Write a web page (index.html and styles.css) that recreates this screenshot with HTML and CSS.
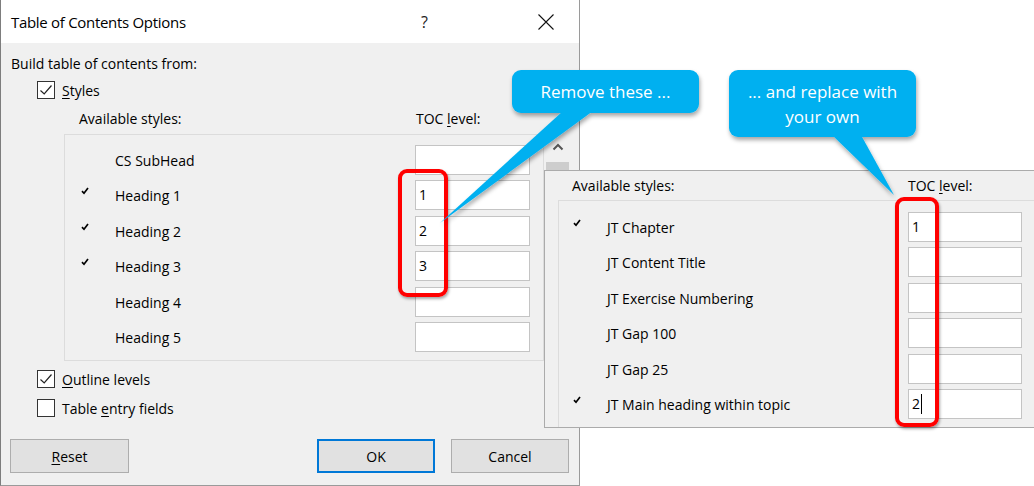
FILE: index.html
```html
<!DOCTYPE html>
<html>
<head>
<meta charset="utf-8">
<link rel="stylesheet" href="styles.css">
</head>
<body>
<div class="dialog">
  <div class="titlebar">
    <span class="title">Table of Contents Options</span>
    <span class="help">?</span>
    <span class="close"><svg width="16" height="16" viewBox="0 0 16 16"><path d="M0.5 0.5 L15.5 15.5 M15.5 0.5 L0.5 15.5" stroke="#111" stroke-width="1.1" fill="none"/></svg></span>
  </div>
  <div class="content">
    <div class="build">Build table of contents from:</div>
    <div class="check-row first">
      <span class="cb"><svg width="16" height="16" viewBox="0 0 16 16"><path d="M2.5 8.5 L6.2 12 L13.5 3.5" stroke="#222" stroke-width="1.2" fill="none"/></svg></span>
      <span class="cl"><u>S</u>tyles</span>
    </div>
    <div class="col-head">
      <span class="avail">Available styles:</span>
      <span>TOC <u>l</u>evel:</span>
    </div>
    <div class="list-wrap">
      <div class="listbox">
        <div class="row"><span class="tick"></span><span class="name">CS SubHead</span><span class="field"></span></div>
        <div class="row"><span class="tick"><svg width="8" height="8" viewBox="0 0 8 8"><path d="M1 4.2 L3 6.3 L7 1" stroke="#000" stroke-width="1.7" fill="none"/></svg></span><span class="name">Heading 1</span><span class="field">1</span></div>
        <div class="row"><span class="tick"><svg width="8" height="8" viewBox="0 0 8 8"><path d="M1 4.2 L3 6.3 L7 1" stroke="#000" stroke-width="1.7" fill="none"/></svg></span><span class="name">Heading 2</span><span class="field">2</span></div>
        <div class="row"><span class="tick"><svg width="8" height="8" viewBox="0 0 8 8"><path d="M1 4.2 L3 6.3 L7 1" stroke="#000" stroke-width="1.7" fill="none"/></svg></span><span class="name">Heading 3</span><span class="field">3</span></div>
        <div class="row"><span class="tick"></span><span class="name">Heading 4</span><span class="field"></span></div>
        <div class="row"><span class="tick"></span><span class="name">Heading 5</span><span class="field"></span></div>
      </div>
      <div class="scrollbar">
        <svg width="12" height="8" viewBox="0 0 12 8"><path d="M1.5 6.5 L6 2 L10.5 6.5" stroke="#555" stroke-width="2" fill="none"/></svg>
        <div class="thumb"></div>
      </div>
    </div>
    <div class="check-row outline">
      <span class="cb"><svg width="16" height="16" viewBox="0 0 16 16"><path d="M2.5 8.5 L6.2 12 L13.5 3.5" stroke="#222" stroke-width="1.2" fill="none"/></svg></span>
      <span class="cl"><u>O</u>utline levels</span>
    </div>
    <div class="check-row entry">
      <span class="cb"></span>
      <span class="cl">Table <u>e</u>ntry fields</span>
    </div>
    <div class="buttons">
      <button class="btn"><u>R</u>eset</button>
      <span class="spacer"></span>
      <button class="btn ok">OK</button>
      <button class="btn">Cancel</button>
    </div>
  </div>
</div>

<div class="panel">
  <div class="panel-head">
    <span class="avail2">Available styles:</span>
    <span>TOC <u>l</u>evel:</span>
  </div>
  <div class="panel-list">
    <div class="row prow"><span class="tick"><svg width="8" height="8" viewBox="0 0 8 8"><path d="M1 4.2 L3 6.3 L7 1" stroke="#000" stroke-width="1.7" fill="none"/></svg></span><span class="name">JT Chapter</span><span class="field">1</span></div>
    <div class="row prow"><span class="tick"></span><span class="name">JT Content Title</span><span class="field"></span></div>
    <div class="row prow"><span class="tick"></span><span class="name">JT Exercise Numbering</span><span class="field"></span></div>
    <div class="row prow"><span class="tick"></span><span class="name">JT Gap 100</span><span class="field"></span></div>
    <div class="row prow"><span class="tick"></span><span class="name">JT Gap 25</span><span class="field"></span></div>
    <div class="row prow"><span class="tick"><svg width="8" height="8" viewBox="0 0 8 8"><path d="M1 4.2 L3 6.3 L7 1" stroke="#000" stroke-width="1.7" fill="none"/></svg></span><span class="name">JT Main heading within topic</span><span class="field">2<span class="caret"></span></span></div>
  </div>
</div>

<div class="redbox r1"></div>
<div class="redbox r2"></div>

<svg class="callouts" width="1034" height="486" viewBox="0 0 1034 486">
  <defs>
    <filter id="sh" x="-20%" y="-20%" width="140%" height="140%">
      <feDropShadow dx="1" dy="3" stdDeviation="2.2" flood-color="#000" flood-opacity="0.35"/>
    </filter>
  </defs>
  <g fill="#00b0f0" filter="url(#sh)">
    <rect x="512" y="70" width="187" height="43" rx="9"/>
    <polygon points="563,111 593,111 440,223"/>
  </g>
  <g fill="#00b0f0" filter="url(#sh)">
    <rect x="729" y="70" width="187" height="67" rx="9"/>
    <polygon points="832,135 861,135 894,195"/>
  </g>
</svg>
<div class="callout-text c1">Remove these ...</div>
<div class="callout-text c2">... and replace with<br>your own</div>
</body>
</html>
```
FILE: styles.css
```css
* { box-sizing: border-box; }
html, body { margin: 0; padding: 0; }
body {
  width: 1034px;
  height: 486px;
  overflow: hidden;
  background: #ffffff;
  font-family: "Open Sans", "Noto Sans", sans-serif;
  font-size: 14px;
  color: #000;
  position: relative;
}
u { text-decoration-thickness: 1px; text-underline-offset: 2px; }

.dialog {
  width: 580px;
  height: 486px;
  border-left: 1px solid #7d7d7d;
  border-right: 1px solid #9a9a9a;
  border-bottom: 1px solid #9a9a9a;
  display: flex;
  flex-direction: column;
  background: #f0f0f0;
}
.titlebar {
  height: 43px;
  flex: 0 0 43px;
  background: #fff;
  display: flex;
  align-items: center;
  padding-left: 10px;
}
.title { font-size: 15px; letter-spacing: -0.3px; flex: 1; }
.help { width: 30px; text-align: center; font-size: 16px; margin-right: 90px; color: #222; padding-right: 3px; }
.close { width: 30px; display: flex; justify-content: center; margin-right: 18px; }

.content {
  flex: 1;
  padding-left: 10px;
  display: flex;
  flex-direction: column;
}
.build { line-height: 20px; margin-top: 11px; }
.check-row {
  display: flex;
  align-items: center;
  height: 18px;
  line-height: 18px;
  margin-left: 26px;
  gap: 7px;
}
.cl { padding-top: 2px; }
.check-row.first { margin-top: 7px; }
.cb {
  width: 18px;
  height: 18px;
  border: 1px solid #333;
  background: #fff;
  display: flex;
  align-items: center;
  justify-content: center;
}
.col-head {
  display: flex;
  line-height: 20px;
  margin-top: 10px;
  padding-left: 68px;
}
.avail { width: 337px; }

.list-wrap {
  display: flex;
  margin-top: 5px;
  margin-left: 53px;
  height: 227px;
}
.listbox {
  width: 480px;
  height: 227px;
  border: 1px solid #dcdcdc;
  padding: 10px 13px 0 16px;
}
.row {
  display: grid;
  grid-template-columns: 34px 300px 115px;
  height: 35.4px;
  align-items: start;
}
.tick { height: 30px; display: flex; align-items: center; padding-bottom: 8px; }
.name { line-height: 30px; padding-top: 1px; }
.field {
  height: 30px;
  background: #fff;
  border: 1px solid #c4c4c4;
  line-height: 28px;
  padding-left: 3px;
  display: flex;
  align-items: center;
}
.scrollbar {
  width: 27px;
  display: flex;
  flex-direction: column;
  align-items: center;
  padding-top: 9px;
}
.thumb {
  width: 23px;
  height: 50px;
  margin-top: 11px;
  background: #cdcdcd;
}

.check-row.outline { margin-top: 9px; }
.check-row.entry { margin-top: 11px; }

.buttons {
  display: flex;
  margin-top: 22px;
  margin-left: -1px;
  margin-right: 10px;
  gap: 16px;
}
.spacer { flex: 1; }
.btn {
  font-family: inherit;
  font-size: 14px;
  color: #000;
  height: 34px;
  width: 118px;
  background: #e1e1e1;
  border: 1px solid #adadad;
  padding: 0;
}
.btn:first-child { width: 119px; }
.btn.ok { border: 2px solid #0078d7; }

/* Overlaid second screenshot panel */
.panel {
  position: absolute;
  left: 544px;
  top: 170px;
  width: 490px;
  height: 258px;
  background: #f0f0f0;
  border: 1px solid #ababab;
  border-right: none;
  display: flex;
  flex-direction: column;
}
.panel-head {
  display: flex;
  line-height: 20px;
  padding-top: 5px;
  padding-left: 27px;
}
.avail2 { width: 336px; }
.panel-list {
  flex: 1;
  margin-top: 4px;
  margin-left: 13px;
  border-left: 1px solid #dcdcdc;
  border-top: 1px solid #dcdcdc;
  padding: 11px 0 0 14px;
}
.prow { grid-template-columns: 34px 301px 114px; }
.caret {
  display: inline-block;
  width: 1px;
  height: 20px;
  background: #000;
  margin-left: 1px;
}

.redbox {
  position: absolute;
  border: 4px solid #ff0000;
  border-radius: 9px;
  box-shadow: 1px 2px 3px rgba(0,0,0,0.35);
}
.r1 { left: 398px; top: 169px; width: 50px; height: 128px; }
.r2 { left: 895px; top: 197px; width: 44px; height: 230px; }

.callouts { position: absolute; left: 0; top: 0; }
.callout-text {
  position: absolute;
  width: 187px;
  color: #fff;
  font-size: 17px;
  line-height: 25px;
  text-align: center;
  display: flex;
  align-items: center;
  justify-content: center;
}
.c1 { left: 512px; top: 70px; height: 43px; }
.c2 { left: 729px; top: 70px; height: 67px; }
```
